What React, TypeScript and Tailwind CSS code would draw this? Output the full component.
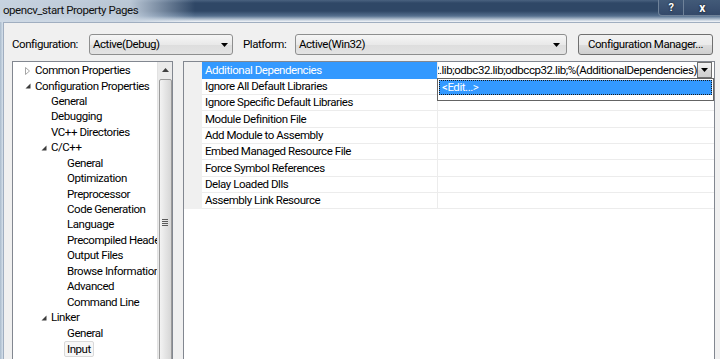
import React from 'react';

type TreeItem = { t: string; l: number; a?: 'c' | 'e'; sel?: boolean };

const tree: TreeItem[] = [
  { t: 'Common Properties', l: 0, a: 'c' },
  { t: 'Configuration Properties', l: 0, a: 'e' },
  { t: 'General', l: 1 },
  { t: 'Debugging', l: 1 },
  { t: 'VC++ Directories', l: 1 },
  { t: 'C/C++', l: 1, a: 'e' },
  { t: 'General', l: 2 },
  { t: 'Optimization', l: 2 },
  { t: 'Preprocessor', l: 2 },
  { t: 'Code Generation', l: 2 },
  { t: 'Language', l: 2 },
  { t: 'Precompiled Headers', l: 2 },
  { t: 'Output Files', l: 2 },
  { t: 'Browse Information', l: 2 },
  { t: 'Advanced', l: 2 },
  { t: 'Command Line', l: 2 },
  { t: 'Linker', l: 1, a: 'e' },
  { t: 'General', l: 2 },
  { t: 'Input', l: 2, sel: true },
];

const props: { t: string; h: number }[] = [
  { t: 'Additional Dependencies', h: 17 },
  { t: 'Ignore All Default Libraries', h: 16 },
  { t: 'Ignore Specific Default Libraries', h: 16 },
  { t: 'Module Definition File', h: 17 },
  { t: 'Add Module to Assembly', h: 16 },
  { t: 'Embed Managed Resource File', h: 16 },
  { t: 'Force Symbol References', h: 17 },
  { t: 'Delay Loaded Dlls', h: 16 },
  { t: 'Assembly Link Resource', h: 16 },
];

const indent = ['pl-[9px]', 'pl-[25px]', 'pl-[41px]'];

function Arrow({ a }: { a?: 'c' | 'e' }) {
  if (a === 'c')
    return (
      <svg width="13" height="10" viewBox="0 0 13 10" className="shrink-0">
        <path d="M3.5 1.5 L7.5 5 L3.5 8.5 Z" fill="none" stroke="#a6a6a6" strokeWidth="1" />
      </svg>
    );
  if (a === 'e')
    return (
      <svg width="13" height="10" viewBox="0 0 13 10" className="shrink-0">
        <path d="M8.5 2.5 L8.5 7.5 L3.5 7.5 Z" fill="#3c3c3c" />
      </svg>
    );
  return <span className="w-[13px] shrink-0" />;
}

function ComboArrow() {
  return (
    <svg width="7" height="4" viewBox="0 0 7 4">
      <path d="M0 0 L7 0 L3.5 4 Z" fill="#000" />
    </svg>
  );
}

export default function App() {
  const font = "font-['Roboto',sans-serif] text-[11.5px] tracking-[-0.45px] text-black";
  return (
    <div className={`relative w-[720px] h-[359px] overflow-hidden bg-[#f0f0f0] flex flex-col ${font}`}>
      {/* title bar */}
      <div className="h-[22px] shrink-0 relative flex items-start bg-[linear-gradient(to_right,rgba(205,216,228,0.96)_0px,rgba(200,212,225,0.9)_130px,rgba(200,212,225,0)_195px),linear-gradient(to_bottom,#4a6280_0px,#2f4766_3px,#2f4766_11px,#56708f_16px,#a9b9ca_19px,#dfe6ee_21px,#f3f5f8_22px)]">
        <span className="ml-[3px] mt-[2px] text-[11.5px] tracking-[-0.45px] text-[#101010] leading-[16px]">opencv_start Property Pages</span>
        <div className="ml-auto flex h-[16px]">
          <div className="w-[26px] h-[16px] flex items-center justify-center border border-t-0 border-[#6f8299] rounded-bl-[4px] bg-[linear-gradient(to_bottom,#425a78,#34496a)]">
            <span className="text-white font-bold text-[11px] leading-none [text-shadow:0_0_2px_#000]">?</span>
          </div>
          <div className="w-[36px] h-[16px] flex items-center justify-center border border-t-0 border-l-0 border-r-0 border-[#6f8299] bg-[linear-gradient(to_bottom,#425a78,#34496a)]">
            <span className="text-white font-bold text-[12px] leading-none [text-shadow:0_0_2px_#000]">x</span>
          </div>
        </div>
      </div>
      {/* body */}
      <div className="flex-1 flex">
        <div className="w-[3px] shrink-0 bg-[linear-gradient(to_right,#a9bacb,#d6e1ec)]" />
        <div className="flex-1 border-l border-t border-[#a0aec0] bg-[#f0f0f0] flex flex-col">
          {/* config row */}
          <div className="flex items-center mt-[11px] h-[21px] pl-[8px]">
            <span className="w-[77px] shrink-0">Configuration:</span>
            <div className="w-[144px] h-[21px] shrink-0 rounded-[3px] border border-[#8e8f8f] bg-[linear-gradient(to_bottom,#f6f6f6,#e9e9e9_50%,#dddddd_51%,#e3e3e3)] flex items-center pl-[3px] pr-[4px]">
              <span className="flex-1">Active(Debug)</span>
              <ComboArrow />
            </div>
            <span className="ml-[10px] w-[52px] shrink-0">Platform:</span>
            <div className="w-[272px] h-[21px] shrink-0 rounded-[3px] border border-[#8e8f8f] bg-[linear-gradient(to_bottom,#f6f6f6,#e9e9e9_50%,#dddddd_51%,#e3e3e3)] flex items-center pl-[3px] pr-[6px]">
              <span className="flex-1">Active(Win32)</span>
              <ComboArrow />
            </div>
            <div className="ml-[11px] w-[135px] h-[21px] shrink-0 rounded-[3px] border border-[#707070] bg-[linear-gradient(to_bottom,#f2f2f2,#ebebeb_50%,#dddddd_51%,#cfcfcf)] flex items-center justify-center">
              <span>Configuration Manager...</span>
            </div>
          </div>
          {/* panes */}
          <div className="flex mt-[6px] pl-[8px]">
            {/* tree */}
            <div className="w-[161px] h-[310px] shrink-0 border border-[#828790] bg-white flex">
              <div className="flex-1 overflow-hidden pt-[1px]">
                {tree.map((it, i) => (
                  <div key={i} className={`h-[15.45px] flex items-center whitespace-nowrap ${indent[it.l]}`}>
                    <Arrow a={it.a} />
                    {it.sel ? (
                      <span className="-ml-[3px] px-[2px] h-[16px] leading-[14px] border border-[#d9d9d9] rounded-[2px] bg-[#f7f7f7]">{it.t}</span>
                    ) : (
                      <span>{it.t}</span>
                    )}
                  </div>
                ))}
              </div>
              <div className="w-[15px] shrink-0 bg-[#eaeaea] border-l border-[#e2e2e2] flex flex-col items-center">
                <div className="h-[16px] w-full flex items-center justify-center">
                  <svg width="7" height="4" viewBox="0 0 7 4">
                    <path d="M0 4 L7 4 L3.5 0 Z" fill="#404040" />
                  </svg>
                </div>
                <div className="mt-[1px] w-[13px] h-[286px] shrink-0 rounded-[2px] border border-[#9b9b9b] bg-[linear-gradient(to_right,#f3f3f3,#e6e6e6_45%,#d6d6d6)] flex flex-col items-center justify-center gap-[1px]">
                  <div className="w-[6px] h-[1px] bg-[#5a5a5a]" />
                  <div className="w-[6px] h-[1px] bg-[#5a5a5a]" />
                  <div className="w-[6px] h-[1px] bg-[#5a5a5a]" />
                  <div className="w-[6px] h-[1px] bg-[#5a5a5a]" />
                </div>
              </div>
            </div>
            {/* property grid */}
            <div className="ml-[10px] w-[532px] h-[310px] shrink-0 border border-[#828790] bg-white flex flex-col">
              {props.map((p, i) => (
                <div key={i} className="flex" style={{ height: p.h }}>
                  <div className="w-[18px] shrink-0 bg-[#f0f0f0]" />
                  <div
                    className={`w-[236px] shrink-0 border-b border-r border-[#ececec] pl-[3px] pt-[1px] flex items-center whitespace-nowrap overflow-hidden ${
                      i === 0 ? 'bg-[#3399ff] text-white border-b-[#3399ff]' : ''
                    }`}
                  >
                    {p.t}
                  </div>
                  <div className="flex-1 border-b border-[#ececec] flex">
                    {i === 0 && (
                      <>
                        <div className="w-[259px] pt-[1px] overflow-hidden flex justify-end items-center whitespace-nowrap bg-white">
                          <span>kernel32.lib;odbc32.lib;odbccp32.lib;%(AdditionalDependencies)</span>
                        </div>
                        <div className="w-[15px] h-[16px] border border-[#707070] bg-[linear-gradient(to_bottom,#f2f2f2,#e4e4e4_50%,#d6d6d6_51%,#cfcfcf)] flex items-center justify-center">
                          <ComboArrow />
                        </div>
                      </>
                    )}
                  </div>
                </div>
              ))}
            </div>
          </div>
        </div>
      </div>
      {/* dropdown list */}
      <div className="absolute left-[437px] top-[78px] w-[277px] h-[23px] border border-[#646464] bg-white p-[1px]">
        <div className="h-[15px] bg-[#3399ff] border border-dotted border-[#1a1a1a] flex items-center pl-[2px] text-white">
          &lt;Edit...&gt;
        </div>
      </div>
    </div>
  );
}
